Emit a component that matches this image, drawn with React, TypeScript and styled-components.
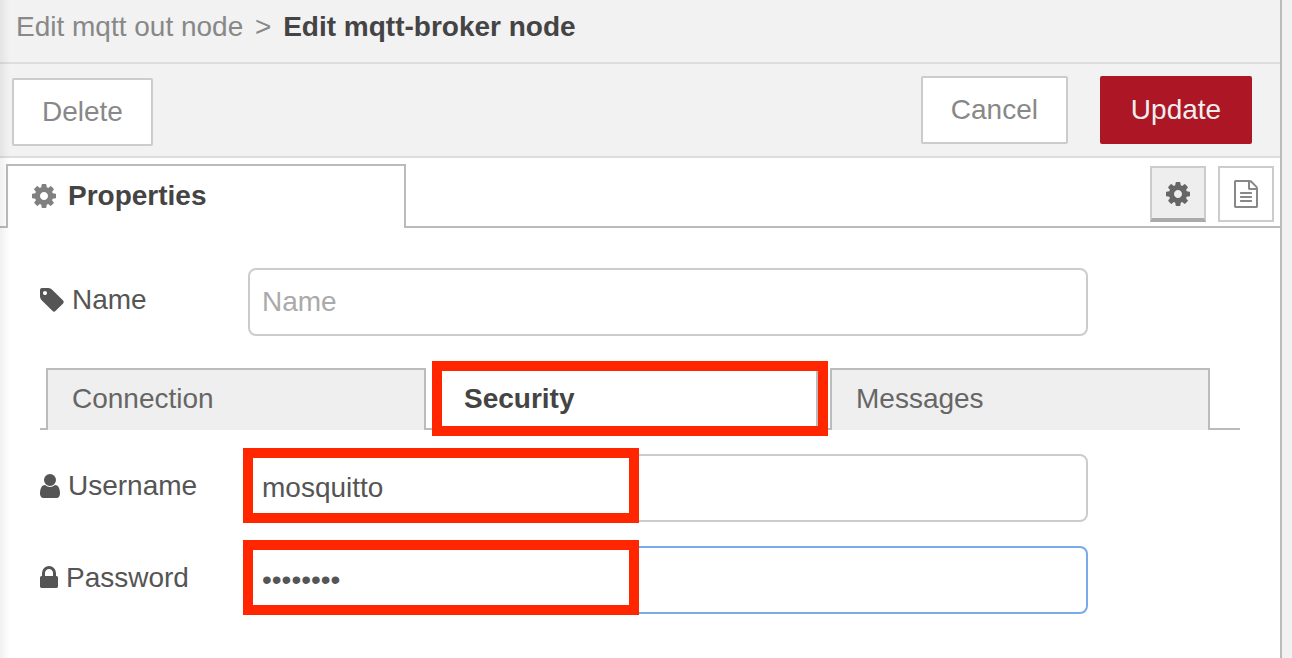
import React from "react";
import styled, { createGlobalStyle, css } from "styled-components";

const GlobalStyle = createGlobalStyle`
  *, *::before, *::after { box-sizing: border-box; }
  body {
    margin: 0;
    background: #f2f2f2;
    color: #555;
    font-family: "Liberation Sans", Helvetica, Arial, sans-serif;
    font-size: 28px;
    line-height: 34px;
  }
  button, input { font: inherit; }
`;

const Page = styled.div`
  min-height: 100vh;
  padding-right: 10px;
  display: flex;
`;

const Tray = styled.main`
  position: relative;
  flex: 1;
  min-width: 0;
  background: #fff;
  border-right: 2px solid #bbb;

  &::before {
    content: "";
    position: absolute;
    inset: 0 auto 0 0;
    width: 10px;
    background: linear-gradient(to right, rgba(0, 0, 0, 0.06), transparent);
    pointer-events: none;
  }
`;

const Header = styled.header`
  padding: 10px 16px 18px;
  background: #f2f2f2;
  border-bottom: 2px solid #ddd;
`;

const Breadcrumb = styled.h1`
  margin: 0;
  font-size: 28px;
  font-weight: normal;
  color: #888;

  span { margin: 0 4px; }
  strong { color: #444; }
`;

const Toolbar = styled.div`
  display: flex;
  align-items: flex-start;
  gap: 32px;
  padding: 12px 28px 10px 12px;
  background: #f2f2f2;
  border-bottom: 2px solid #ddd;
`;

const ToolbarButton = styled.button<{ $primary?: boolean; $leading?: boolean }>`
  height: 68px;
  padding: 0 28px;
  border: 2px solid #ccc;
  border-radius: 2px;
  background: #fff;
  color: #888;
  cursor: pointer;
  ${(p) => p.$primary && css`
    min-width: 152px;
    border-color: #ad1625;
    background: #ad1625;
    color: #eee;
  `}
  ${(p) => p.$leading && css`
    margin: 2px auto 0 0;
  `}
`;

const PanelBar = styled.div`
  display: flex;
  justify-content: space-between;
  padding: 6px 6px 0;
  box-shadow: inset 0 -2px #bbb;
`;

const PanelTab = styled.button`
  display: flex;
  align-items: center;
  gap: 12px;
  width: 400px;
  height: 64px;
  padding: 0 24px 2px;
  border: 2px solid #bbb;
  border-bottom: 0;
  background: #fff;
  color: #444;
  font-weight: bold;

  svg { color: #808080; }
`;

const ViewSwitch = styled.div`
  display: flex;
  gap: 12px;
  padding-top: 2px;
`;

const ViewButton = styled.button<{ $selected?: boolean }>`
  display: flex;
  align-items: center;
  justify-content: center;
  width: 56px;
  height: 56px;
  padding: 0;
  border: 2px solid #ccc;
  background: #fff;
  color: #888;
  ${(p) => p.$selected && css`
    padding-top: 2px;
    border-bottom: 4px solid #aaa;
    background: #eee;
    color: #666;
  `}
`;

const Form = styled.form`
  padding: 40px;
`;

const FormRow = styled.div`
  display: flex;
  align-items: center;
  margin-bottom: 24px;
`;

const Label = styled.label`
  display: flex;
  align-items: center;
  gap: 8px;
  flex: 0 0 208px;
  padding-bottom: 4px;
`;

const Field = styled.div`
  position: relative;
  width: 70%;
`;

const Input = styled.input<{ $active?: boolean }>`
  display: block;
  width: 100%;
  height: 68px;
  padding: 0 12px;
  border: 2px solid ${(p) => (p.$active ? "#78aaec" : "#ccc")};
  border-radius: 8px;
  background: #fff;
  color: #555;
  outline: none;

  &::placeholder { color: #aaa; opacity: 1; }
`;

const Tabs = styled.div`
  display: flex;
  gap: 12px;
  margin: 32px 0 24px;
  padding: 0 30px 0 6px;
  box-shadow: inset 0 -2px #bbb;
`;

const TabSlot = styled.div`
  position: relative;
  flex: 1;
  min-width: 0;
`;

const Tab = styled.button<{ $selected?: boolean }>`
  display: block;
  width: 100%;
  height: 62px;
  padding: 0 24px 2px;
  border: 2px solid #bbb;
  border-bottom: 0;
  background: ${(p) => (p.$selected ? "#fff" : "#efefef")};
  color: ${(p) => (p.$selected ? "#444" : "#666")};
  font-weight: ${(p) => (p.$selected ? "bold" : "normal")};
  text-align: left;
`;

/* Red marker frame laid over the part that needs attention. */
const Marker = styled.span<{ $on: "tab" | "field" }>`
  position: absolute;
  top: ${(p) => (p.$on === "tab" ? "-7px" : "-6px")};
  left: ${(p) => (p.$on === "tab" ? "-6px" : "-5px")};
  width: 396px;
  height: 75px;
  border: 10px solid #ff2600;
  pointer-events: none;
`;

const icons = {
  cog: {
    box: "128 128 1536 1536",
    w: 24,
    h: 24,
    d: "M1152 896q0-106-75-181t-181-75-181 75-75 181 75 181 181 75 181-75 75-181zm512-109v222q0 12-8 23t-20 13l-185 28q-19 54-39 91 35 50 107 138 10 12 10 25t-9 23q-27 37-99 108t-94 71q-12 0-26-9l-138-108q-44 23-91 38-16 136-29 186-7 28-36 28h-222q-14 0-24.5-8.5t-11.5-21.5l-28-184q-49-16-90-37l-141 107q-10 9-25 9-14 0-25-11-126-114-165-168-7-10-7-23 0-12 8-23 15-21 51-66.5t54-70.5q-27-50-41-99l-183-27q-13-2-21-12.5t-8-23.5v-222q0-12 8-23t19-13l186-28q14-46 39-92-40-57-107-138-10-12-10-24 0-10 9-23 26-36 98.5-107.5t94.5-71.5q13 0 26 10l138 107q44-23 91-38 16-136 29-186 7-28 36-28h222q14 0 24.5 8.5t11.5 21.5l28 184q49 16 90 37l142-107q9-9 24-9 13 0 25 10 129 119 165 170 7 8 7 22 0 12-8 23-15 21-51 66.5t-54 70.5q26 50 41 98l183 28q13 2 21 12.5t8 23.5z",
  },
  file: {
    box: "128 0 1536 1792",
    w: 24,
    h: 28,
    d: "M1596 380q28 28 48 76t20 88v1152q0 40-28 68t-68 28h-1344q-40 0-68-28t-28-68v-1600q0-40 28-68t68-28h896q40 0 88 20t76 48zm-444-244v376h376q-10-29-22-41l-313-313q-12-12-41-22zm384 1528v-1024h-416q-40 0-68-28t-28-68v-416h-768v1536h1280zm-1024-864q0-14 9-23t23-9h704q14 0 23 9t9 23v64q0 14-9 23t-23 9h-704q-14 0-23-9t-9-23v-64zm736 224q14 0 23 9t9 23v64q0 14-9 23t-23 9h-704q-14 0-23-9t-9-23v-64q0-14 9-23t23-9h704zm0 256q14 0 23 9t9 23v64q0 14-9 23t-23 9h-704q-14 0-23-9t-9-23v-64q0-14 9-23t23-9h704z",
  },
  tag: {
    box: "128 128 1536 1536",
    w: 24,
    h: 24,
    d: "M576 448q0-53-37.5-90.5t-90.5-37.5-90.5 37.5-37.5 90.5 37.5 90.5 90.5 37.5 90.5-37.5 37.5-90.5zm1067 576q0 53-37 90l-491 492q-39 37-91 37-53 0-90-37l-715-716q-38-37-64.5-101t-26.5-117v-416q0-52 38-90t90-38h416q53 0 117 26.5t102 64.5l715 714q37 39 37 91z",
  },
  user: {
    box: "256 128 1280 1536",
    w: 20,
    h: 24,
    d: "M1536 1399q0 109-62.5 187t-150.5 78h-854q-88 0-150.5-78t-62.5-187q0-85 8.5-160.5t31.5-152 58.5-131 94-89 134.5-34.5q131 128 313 128t313-128q76 0 134.5 34.5t94 89 58.5 131 31.5 152 8.5 160.5zm-256-887q0 159-112.5 271.5t-271.5 112.5-271.5-112.5-112.5-271.5 112.5-271.5 271.5-112.5 271.5 112.5 112.5 271.5z",
  },
  lock: {
    box: "320 128 1152 1536",
    w: 18,
    h: 24,
    d: "M640 768h512v-192q0-106-75-181t-181-75-181 75-75 181v192zm832 96v576q0 40-28 68t-68 28h-960q-40 0-68-28t-28-68v-576q0-40 28-68t68-28h32v-192q0-184 132-316t316-132 316 132 132 316v192h32q40 0 68 28t28 68z",
  },
};

function Icon({ name }: { name: keyof typeof icons }) {
  const { box, w, h, d } = icons[name];
  return (
    <svg viewBox={box} width={w} height={h} fill="currentColor" aria-hidden="true">
      <path d={d} />
    </svg>
  );
}

export default function App() {
  return (
    <Page>
      <GlobalStyle />
      <Tray>
        <Header>
          <Breadcrumb>
            Edit mqtt out node <span>&gt;</span> <strong>Edit mqtt-broker node</strong>
          </Breadcrumb>
        </Header>
        <Toolbar>
          <ToolbarButton type="button" $leading>Delete</ToolbarButton>
          <ToolbarButton type="button">Cancel</ToolbarButton>
          <ToolbarButton type="button" $primary>Update</ToolbarButton>
        </Toolbar>
        <PanelBar>
          <PanelTab type="button">
            <Icon name="cog" />
            Properties
          </PanelTab>
          <ViewSwitch>
            <ViewButton type="button" aria-label="Properties" $selected>
              <Icon name="cog" />
            </ViewButton>
            <ViewButton type="button" aria-label="Description">
              <Icon name="file" />
            </ViewButton>
          </ViewSwitch>
        </PanelBar>
        <Form>
          <FormRow>
            <Label htmlFor="name"><Icon name="tag" />Name</Label>
            <Field>
              <Input id="name" type="text" placeholder="Name" />
            </Field>
          </FormRow>
          <Tabs role="tablist">
            <TabSlot>
              <Tab type="button" role="tab" aria-selected={false}>Connection</Tab>
            </TabSlot>
            <TabSlot>
              <Tab type="button" role="tab" aria-selected $selected>Security</Tab>
              <Marker $on="tab" />
            </TabSlot>
            <TabSlot>
              <Tab type="button" role="tab" aria-selected={false}>Messages</Tab>
            </TabSlot>
          </Tabs>
          <FormRow>
            <Label htmlFor="username"><Icon name="user" />Username</Label>
            <Field>
              <Input id="username" type="text" defaultValue="mosquitto" />
              <Marker $on="field" />
            </Field>
          </FormRow>
          <FormRow>
            <Label htmlFor="password"><Icon name="lock" />Password</Label>
            <Field>
              <Input id="password" type="password" defaultValue="password" $active />
              <Marker $on="field" />
            </Field>
          </FormRow>
        </Form>
      </Tray>
    </Page>
  );
}
